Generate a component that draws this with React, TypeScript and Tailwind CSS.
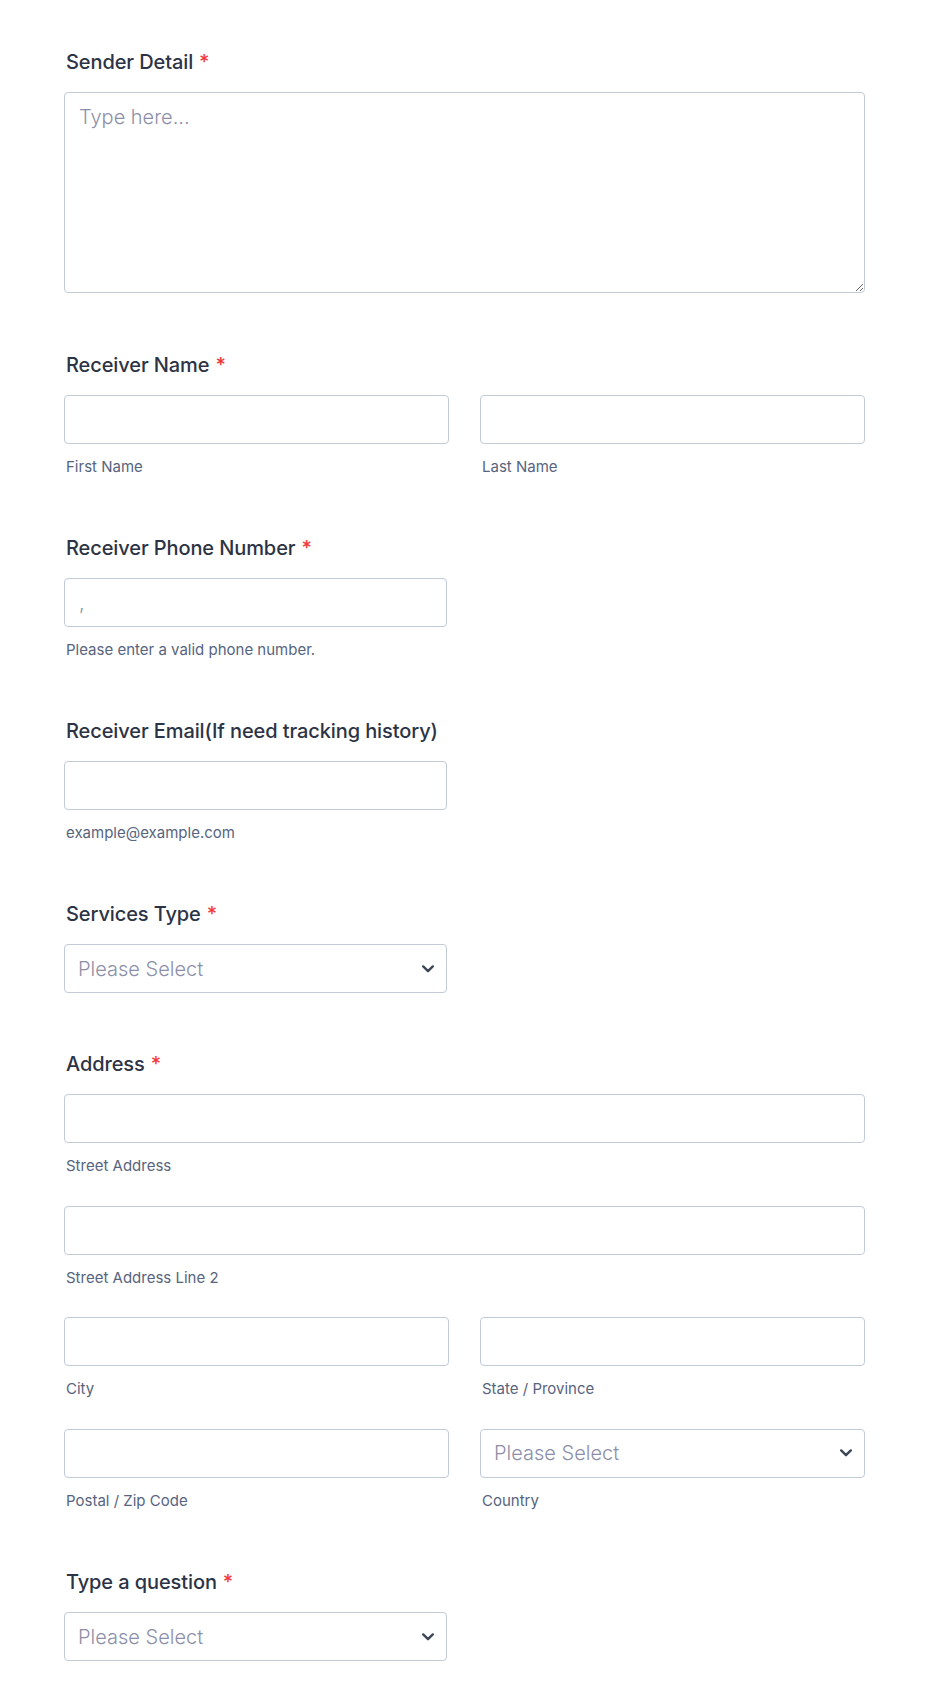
const font = { fontFamily: "Inter, 'Noto Sans', sans-serif" };

function Label({ text, required }: { text: string; required?: boolean }) {
  return (
    <label className="mb-[18px] block h-6 pl-[2px] text-[20px] leading-6 font-medium tracking-[-0.1px] text-[#2c3345]">
      {text}
      {required && <span className="ml-[6px] text-[#f23a3c]">*</span>}
    </label>
  );
}

function Sub({ text }: { text: string }) {
  return (
    <span className="mt-[13px] block h-5 pl-[2px] text-[15px] leading-5 text-[#57647e]">
      {text}
    </span>
  );
}

function Input({ placeholder }: { placeholder?: string }) {
  return (
    <input
      type="text"
      placeholder={placeholder}
      className="block h-[49px] w-full rounded-[4px] border border-[#c3cad8] bg-white px-[14px] text-[20px] font-light text-[#2c3345] outline-none placeholder:text-[#8d8fa8]"
    />
  );
}

function Chevron() {
  return (
    <svg
      className="pointer-events-none absolute top-1/2 right-[13px] -translate-y-1/2"
      width="12"
      height="8"
      viewBox="0 0 12 8"
      fill="none"
    >
      <path
        d="M1.2 1.4 6 6.2l4.8-4.8"
        stroke="#3e4758"
        strokeWidth="2.4"
        strokeLinecap="round"
        strokeLinejoin="round"
      />
    </svg>
  );
}

function Select() {
  return (
    <div className="relative">
      <select
        defaultValue=""
        className="block h-[49px] w-full appearance-none rounded-[4px] border border-[#c3cad8] bg-white px-[13px] text-[20px] font-light text-[#8d8fa8] outline-none"
        style={font}
      >
        <option value="">Please Select</option>
      </select>
      <Chevron />
    </div>
  );
}

function Field({ children }: { children: React.ReactNode }) {
  return <div className="mb-[59px]">{children}</div>;
}

export default function App() {
  return (
    <div className="min-h-[1691px] bg-white" style={font}>
      <form className="ml-[64px] w-[801px] pt-[50px] pb-[31px]">
        <div className="mb-[60px]">
          <Label text="Sender Detail" required />
          <textarea
            placeholder="Type here..."
            className="block h-[201px] w-full rounded-[4px] border border-[#c3cad8] bg-white px-[14px] py-[10px] text-[20px] leading-7 font-light text-[#2c3345] outline-none placeholder:text-[#8d8fa8]"
            style={font}
          />
        </div>

        <Field>
          <Label text="Receiver Name" required />
          <div className="grid grid-cols-2 gap-[31px]">
            <div>
              <Input />
              <Sub text="First Name" />
            </div>
            <div>
              <Input />
              <Sub text="Last Name" />
            </div>
          </div>
        </Field>

        <Field>
          <Label text="Receiver Phone Number" required />
          <div className="w-[383px]">
            <Input placeholder="," />
            <Sub text="Please enter a valid phone number." />
          </div>
        </Field>

        <Field>
          <Label text="Receiver Email(If need tracking history)" />
          <div className="w-[383px]">
            <Input />
            <Sub text="example@example.com" />
          </div>
        </Field>

        <Field>
          <Label text="Services Type" required />
          <div className="w-[383px]">
            <Select />
          </div>
        </Field>

        <div className="mb-[59.5px]">
          <Label text="Address" required />
          <div className="flex flex-col gap-[29.5px]">
            <div>
              <Input />
              <Sub text="Street Address" />
            </div>
            <div>
              <Input />
              <Sub text="Street Address Line 2" />
            </div>
            <div className="grid grid-cols-2 gap-[31px]">
              <div>
                <Input />
                <Sub text="City" />
              </div>
              <div>
                <Input />
                <Sub text="State / Province" />
              </div>
            </div>
            <div className="grid grid-cols-2 gap-[31px]">
              <div>
                <Input />
                <Sub text="Postal / Zip Code" />
              </div>
              <div>
                <Select />
                <Sub text="Country" />
              </div>
            </div>
          </div>
        </div>

        <div>
          <Label text="Type a question" required />
          <div className="w-[383px]">
            <Select />
          </div>
        </div>
      </form>
    </div>
  );
}
